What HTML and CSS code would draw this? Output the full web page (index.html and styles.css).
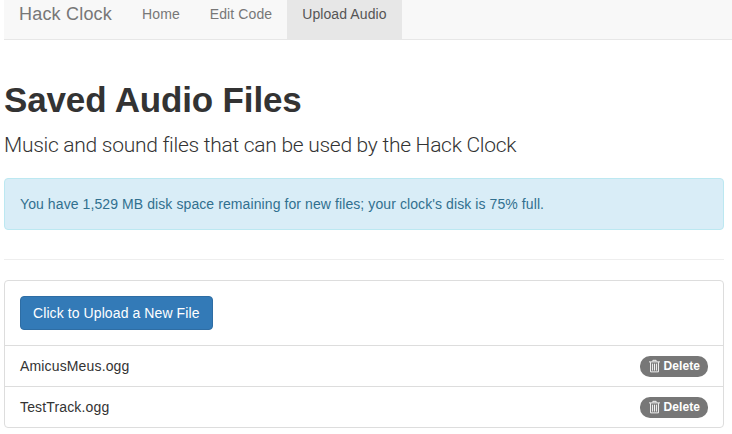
FILE: index.html
```html
<!DOCTYPE html>
<html lang="en">

<head>
    <meta charset="UTF-8">
    <title>Hack Clock</title>
    <link rel="stylesheet" href="styles.css">
</head>

<body>
    <nav class="navbar">
        <a href="#" class="brand">Hack Clock</a>
        <a href="#" class="nav-link">Home</a>
        <a href="#" class="nav-link">Edit Code</a>
        <a href="#" class="nav-link active">Upload Audio</a>
    </nav>

    <div class="container">
        <h1>Saved Audio Files</h1>
        <p class="lead">Music and sound files that can be used by the Hack Clock</p>

        <div class="alert">You have 1,529 MB disk space remaining for new files; your clock's disk is 75% full.</div>

        <hr>

        <ul class="file-list">
            <li class="file-item upload-row">
                <a href="#" class="button">Click to Upload a New File</a>
            </li>
            <li class="file-item">
                <span>AmicusMeus.ogg</span>
                <a href="#" class="badge">
                    <svg class="trash" viewBox="0 0 12 14"><path d="M4.2 2V.8h3.6V2M0 2.5h12M1.7 2.8V13.4h8.6V2.8M3.9 4.4v7.6M6 4.4v7.6M8.1 4.4v7.6" /></svg>
                    Delete
                </a>
            </li>
            <li class="file-item">
                <span>TestTrack.ogg</span>
                <a href="#" class="badge">
                    <svg class="trash" viewBox="0 0 12 14"><path d="M4.2 2V.8h3.6V2M0 2.5h12M1.7 2.8V13.4h8.6V2.8M3.9 4.4v7.6M6 4.4v7.6M8.1 4.4v7.6" /></svg>
                    Delete
                </a>
            </li>
        </ul>
    </div>
</body>

</html>
```

FILE: styles.css
```css
* {
    box-sizing: border-box;
}

body {
    font-family: 'Liberation Sans', Arial, sans-serif;
    font-size: 14px;
    line-height: 20px;
    letter-spacing: 0.09px;
    margin: 0;
    padding-left: 4px;
    background-color: #fff;
    color: #333;
    overflow: hidden;
}

a {
    text-decoration: none;
}

.navbar {
    display: flex;
    height: 40px;
    background-color: #f8f8f8;
    border-bottom: 1px solid #e7e7e7;
}

.brand {
    padding: 4px 15px 0;
    font-size: 18px;
    letter-spacing: 0.2px;
    line-height: 20px;
    color: #777;
}

.nav-link {
    padding: 4px 15px 0;
    letter-spacing: 0.1px;
    color: #777;
}

.nav-link.active {
    background-color: #e7e7e7;
    color: #555;
}

.container {
    width: 720px;
}

h1 {
    margin: 40px 0 10px;
    font-size: 35px;
    letter-spacing: -0.15px;
    line-height: 40px;
    font-weight: 700;
    color: #333;
}

.lead {
    margin: 0 0 18px;
    font-family: Roboto, 'Liberation Sans', sans-serif;
    font-size: 21px;
    letter-spacing: -0.28px;
    line-height: 30px;
    font-weight: 300;
}

.alert {
    height: 52px;
    padding: 15px;
    background-color: #d9edf7;
    border: 1px solid #bce8f1;
    border-radius: 4px;
    color: #31708f;
}

hr {
    margin: 29px 0 20px;
    border: 0;
    border-top: 1px solid #eee;
}

.file-list {
    margin: 0;
    padding: 0;
    list-style: none;
    background-color: #fff;
    border: 1px solid #ddd;
    border-radius: 4px;
}

.file-item {
    display: flex;
    justify-content: space-between;
    align-items: center;
    height: 41px;
    padding: 0 15px;
    border-top: 1px solid #ddd;
    letter-spacing: 0.15px;
}

.upload-row {
    height: 64px;
    border-top: 0;
}

.button {
    display: inline-block;
    padding: 6px 12px;
    background-color: #337ab7;
    border: 1px solid #2e6da4;
    border-radius: 4px;
    color: #fff;
    letter-spacing: 0.09px;
}

.badge {
    display: flex;
    align-items: center;
    gap: 3px;
    height: 21px;
    padding: 0 8px 0 9px;
    background-color: #777;
    border-radius: 10px;
    color: #fff;
    font-size: 12px;
    line-height: 1;
    font-weight: 700;
    letter-spacing: 0.09px;
}

.trash {
    width: 11px;
    height: 14px;
    fill: none;
    stroke: #fff;
    stroke-width: 1;
}
```
